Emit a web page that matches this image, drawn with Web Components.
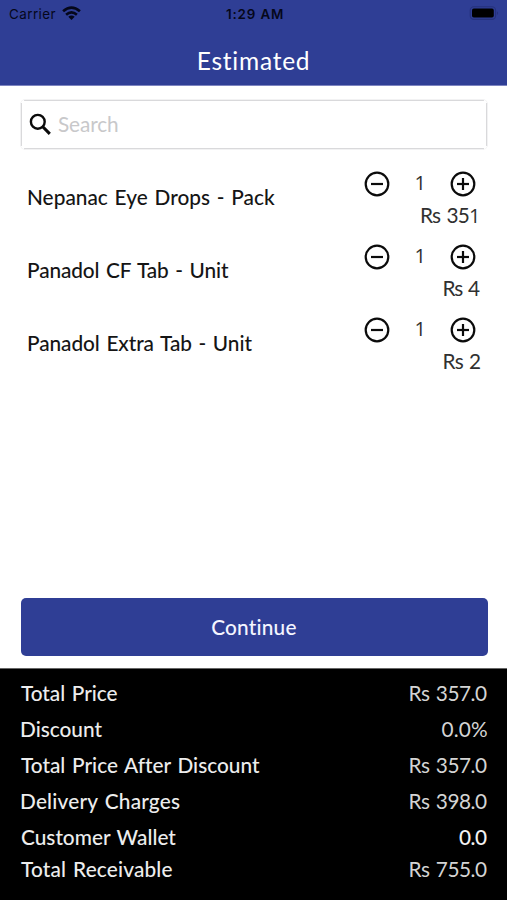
<!DOCTYPE html>
<html lang="en">
<head>
<meta charset="utf-8">
<title>Estimated</title>
<style>
html, body { margin: 0; height: 900px; overflow: hidden; background: #fff; }
</style>
</head>
<body>
<estimate-screen></estimate-screen>
<script>
const define = (name, html, ready) => {
  const template = document.createElement('template');
  template.innerHTML = html;
  customElements.define(name, class extends HTMLElement {
    connectedCallback() {
      if (this.shadowRoot) return;
      this.attachShadow({ mode: 'open' }).append(template.content.cloneNode(true));
      if (ready) ready(this, this.shadowRoot);
    }
  });
};

/* A line of text whose glyphs are tracked to fill the width given in "w". */
const pen = document.createElement('canvas').getContext('2d');
define('fit-text', `
<style>
:host { display: block; flex: none; line-height: 24px; height: 24px; }
span { display: block; white-space: pre; }
</style><span><slot></slot></span>`, (host, root) => {
  const text = host.textContent;
  const style = getComputedStyle(host);
  const width = Number(host.getAttribute('w'));
  pen.font = `${style.fontWeight} ${style.fontSize} ${style.fontFamily}`;
  const m = pen.measureText(text);
  const gaps = text.split(' ').length - 1;
  const wordGap = gaps * parseFloat(style.wordSpacing || 0);
  const ink = m.actualBoundingBoxLeft + m.actualBoundingBoxRight + wordGap;
  host.style.width = width + 'px';
  const span = root.querySelector('span');
  span.style.marginLeft = m.actualBoundingBoxLeft + 'px';
  if (text.length > 1) span.style.letterSpacing = (width - ink) / (text.length - 1) + 'px';
});

define('status-bar', `
<style>
:host { display: grid; grid-template-columns: 1fr auto 1fr; height: 27px; padding: 0 7px 0 9px; color: #05071a; font: 400 13.4px Inter, sans-serif; }
div { display: flex; }
.left { gap: 6px; }
.right { justify-content: flex-end; }
fit-text { margin-top: 2px; word-spacing: 0; }
.time { font-weight: 600; }
.left svg { margin-top: 6px; }
.right svg { margin-top: 6px; }
</style>
<div class="left"><fit-text w="46.5">Carrier</fit-text>
<svg width="19" height="14" viewBox="0 0 19 14"><g fill="none" stroke="#05071a" stroke-width="2.7"><path d="M1.1 5.2Q9.5-2.1 17.9 5.2"/><path d="M4.1 8.7Q9.5 4.2 14.9 8.7"/></g><path d="M6.3 10.8Q9.5 8.4 12.7 10.8L9.5 14Z" fill="#05071a"/></svg></div>
<fit-text class="time" w="57">1:29 AM</fit-text>
<div class="right"><svg width="31" height="15" viewBox="0 0 31 15"><rect x="1.2" y=".8" width="25.4" height="12.6" rx="3.6" fill="none" stroke="#26327c" stroke-width="1.1"/><rect x="3" y="2.6" width="21.8" height="9" rx="1.8" fill="#000"/><path d="M28 5.2Q30.3 7 28 9Z" fill="#26327c"/></svg></div>`);

define('app-header', `
<style>
:host { display: flex; flex-direction: column; height: 85px; background: #2f3e95; border-bottom: 1px solid #7d84c0; color: #fff; }
.title { align-self: center; font-size: 24.5px; font-weight: 400; margin: 22px 0 0; }
</style>
<status-bar></status-bar>
<fit-text class="title" w="109.5">Estimated</fit-text>`);

define('search-box', `
<style>
:host {
  display: flex; align-items: flex-start; box-sizing: border-box; height: 51px;
  margin: 12.5px 19px 0 20px; padding: 1.5px 0 0 9px; border-radius: 5px; color: #c8c8ca;
  --line: linear-gradient(#d9d9db, #d9d9db);
  background: var(--line) 50% 1px / calc(100% - 8px) 1px no-repeat,
    var(--line) 50% 100% / calc(100% - 8px) 2px no-repeat,
    var(--line) 0 50% / 2px calc(100% - 8px) no-repeat,
    var(--line) 100% 50% / 2px calc(100% - 8px) no-repeat;
  box-shadow: inset 0 0 0 1px #f2f2f3;
}
svg { margin: 13px 6px 0 0; }
fit-text { margin-top: 11.5px; font-weight: 400; }
</style>
<svg width="23" height="23" viewBox="0 0 23 23" fill="none" stroke="#0b0b0b"><circle cx="8.8" cy="8.8" r="6.9" stroke-width="2.4"/><path d="M14 14L20.8 20.8" stroke-width="3.1"/></svg>
<fit-text w="60">Search</fit-text>`);

define('round-button', `
<style>:host { display: block; height: 26px; width: 26px; } svg { display: block; }</style>
<svg width="26" height="26" viewBox="0 0 26 26" fill="none" stroke="#0b0b0b" stroke-width="2.2"><circle cx="13" cy="13" r="11.3"/><path d="M7 13H19"/><path class="v" d="M13 7V19"/></svg>`,
(host, root) => { if (host.getAttribute('kind') === 'minus') root.querySelector('.v').remove(); });

define('cart-item', `
<style>
:host { display: flex; justify-content: space-between; height: 73.3px; padding: 0 27px 0 28px; color: #151515; }
.name { padding-top: 14.2px; }
.side { display: flex; flex-direction: column; align-items: flex-end; color: #303030; font-weight: 400; }
.stepper { display: flex; width: 112px; justify-content: space-between; margin-right: 4px; height: 32.2px; }
.qty { font-family: "Open Sans", sans-serif; font-size: 20px; margin-top: .3px; }
</style>
<div class="name"><slot name="name"></slot></div>
<div class="side">
<div class="stepper"><round-button kind="minus"></round-button><fit-text class="qty" w="9">1</fit-text><round-button kind="plus"></round-button></div>
<div class="price"><slot name="price"></slot></div>
</div>`);

define('continue-button', `
<style>
:host { display: flex; justify-content: center; align-items: flex-start; height: 57.7px; margin: 0 19.5px 0 20.5px; background: #2f3e95; border-radius: 5px; color: #f4f5ff; }
fit-text { margin-top: 16.5px; }
</style><fit-text w="85.5">Continue</fit-text>`);

define('total-row', `
<style>
:host { display: flex; justify-content: space-between; height: 35.9px; }
</style><slot name="label"></slot><slot name="value"></slot>`);

define('totals-panel', `
<style>
:host { display: block; box-sizing: border-box; height: 232px; padding: 12.4px 20px 0 21px; background: #000; border-top: 1px solid #666; color: #ededed; }
.value { font-weight: 400; color: #d4d4d4; }
.strong { color: #f2f2f2; }
.tight { height: 32.2px; }
</style>
<total-row><fit-text slot="label" w="96.5">Total Price</fit-text><fit-text slot="value" class="value" w="77.5">Rs 357.0</fit-text></total-row>
<total-row><fit-text slot="label" w="81.5">Discount</fit-text><fit-text slot="value" class="value" w="45.5">0.0%</fit-text></total-row>
<total-row><fit-text slot="label" w="239.5">Total Price After Discount</fit-text><fit-text slot="value" class="value" w="77.5">Rs 357.0</fit-text></total-row>
<total-row><fit-text slot="label" w="159.5">Delivery Charges</fit-text><fit-text slot="value" class="value" w="77.5">Rs 398.0</fit-text></total-row>
<total-row class="tight"><fit-text slot="label" w="156">Customer Wallet</fit-text><fit-text slot="value" class="strong" w="28">0.0</fit-text></total-row>
<total-row><fit-text slot="label" w="151.5">Total Receivable</fit-text><fit-text slot="value" class="value" w="77.5">Rs 755.0</fit-text></total-row>`);

define('estimate-screen', `
<style>
:host { display: flex; flex-direction: column; width: 507px; height: 900px; font: 500 20.8px Lato, "Liberation Sans", sans-serif; word-spacing: 1.5px; }
.list { flex: 1; padding-top: 21px; }
.one { font-family: "Open Sans", sans-serif; font-size: 20px; line-height: 1; }
continue-button { margin-bottom: 12.3px; }
</style>
<app-header></app-header>
<search-box></search-box>
<div class="list">
<cart-item><fit-text slot="name" w="247">Nepanac Eye Drops - Pack</fit-text><fit-text slot="price" w="59">Rs 35<span class="one">1</span></fit-text></cart-item>
<cart-item><fit-text slot="name" w="202">Panadol CF Tab - Unit</fit-text><fit-text slot="price" w="36.5">Rs 4</fit-text></cart-item>
<cart-item><fit-text slot="name" w="225">Panadol Extra Tab - Unit</fit-text><fit-text slot="price" w="36.5">Rs 2</fit-text></cart-item>
</div>
<continue-button></continue-button>
<totals-panel></totals-panel>`);
</script>
</body>
</html>
